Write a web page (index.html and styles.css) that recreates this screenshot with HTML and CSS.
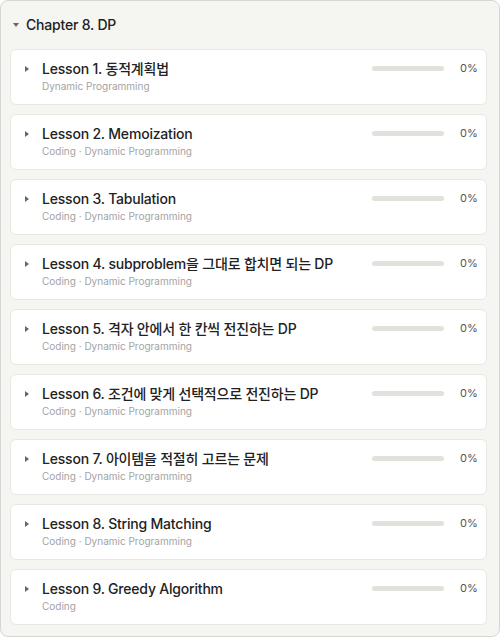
FILE: index.html
```html
<!DOCTYPE html>
<html lang="ko">
<head>
<meta charset="utf-8">
<title>Chapter 8. DP</title>
<link rel="stylesheet" href="styles.css">
</head>
<body>
<section class="chapter">
  <header class="chapter-head">
    <span class="caret-down"></span>
    <h2 class="chapter-title">Chapter 8. DP</h2>
  </header>
  <ul class="lessons">
    <li class="lesson">
      <span class="caret-right"></span>
      <div class="lesson-info">
        <div class="lesson-title">Lesson 1. 동적계획법</div>
        <div class="lesson-tags">Dynamic Programming</div>
      </div>
      <div class="progress"><div class="bar"><div class="fill" style="width:0%"></div></div><span class="pct">0%</span></div>
    </li>
    <li class="lesson">
      <span class="caret-right"></span>
      <div class="lesson-info">
        <div class="lesson-title">Lesson 2. Memoization</div>
        <div class="lesson-tags">Coding · Dynamic Programming</div>
      </div>
      <div class="progress"><div class="bar"><div class="fill" style="width:0%"></div></div><span class="pct">0%</span></div>
    </li>
    <li class="lesson">
      <span class="caret-right"></span>
      <div class="lesson-info">
        <div class="lesson-title">Lesson 3. Tabulation</div>
        <div class="lesson-tags">Coding · Dynamic Programming</div>
      </div>
      <div class="progress"><div class="bar"><div class="fill" style="width:0%"></div></div><span class="pct">0%</span></div>
    </li>
    <li class="lesson">
      <span class="caret-right"></span>
      <div class="lesson-info">
        <div class="lesson-title">Lesson 4. subproblem을 그대로 합치면 되는 DP</div>
        <div class="lesson-tags">Coding · Dynamic Programming</div>
      </div>
      <div class="progress"><div class="bar"><div class="fill" style="width:0%"></div></div><span class="pct">0%</span></div>
    </li>
    <li class="lesson">
      <span class="caret-right"></span>
      <div class="lesson-info">
        <div class="lesson-title">Lesson 5. 격자 안에서 한 칸씩 전진하는 DP</div>
        <div class="lesson-tags">Coding · Dynamic Programming</div>
      </div>
      <div class="progress"><div class="bar"><div class="fill" style="width:0%"></div></div><span class="pct">0%</span></div>
    </li>
    <li class="lesson">
      <span class="caret-right"></span>
      <div class="lesson-info">
        <div class="lesson-title">Lesson 6. 조건에 맞게 선택적으로 전진하는 DP</div>
        <div class="lesson-tags">Coding · Dynamic Programming</div>
      </div>
      <div class="progress"><div class="bar"><div class="fill" style="width:0%"></div></div><span class="pct">0%</span></div>
    </li>
    <li class="lesson">
      <span class="caret-right"></span>
      <div class="lesson-info">
        <div class="lesson-title">Lesson 7. 아이템을 적절히 고르는 문제</div>
        <div class="lesson-tags">Coding · Dynamic Programming</div>
      </div>
      <div class="progress"><div class="bar"><div class="fill" style="width:0%"></div></div><span class="pct">0%</span></div>
    </li>
    <li class="lesson">
      <span class="caret-right"></span>
      <div class="lesson-info">
        <div class="lesson-title">Lesson 8. String Matching</div>
        <div class="lesson-tags">Coding · Dynamic Programming</div>
      </div>
      <div class="progress"><div class="bar"><div class="fill" style="width:0%"></div></div><span class="pct">0%</span></div>
    </li>
    <li class="lesson">
      <span class="caret-right"></span>
      <div class="lesson-info">
        <div class="lesson-title">Lesson 9. Greedy Algorithm</div>
        <div class="lesson-tags">Coding</div>
      </div>
      <div class="progress"><div class="bar"><div class="fill" style="width:0%"></div></div><span class="pct">0%</span></div>
    </li>
  </ul>
</section>
</body>
</html>
```
FILE: styles.css
```css
* { box-sizing: border-box; }
html, body { margin: 0; padding: 0; background: #ffffff; }
body {
  font-family: Inter, "Noto Sans CJK KR", sans-serif;
  color: #222;
}
.chapter {
  width: 500px;
  height: 637px;
  background: #f5f5f1;
  border: 1px solid #d6d6d2;
  border-radius: 8px;
  padding: 0 12px 11px 9px;
}
.chapter-head {
  display: flex;
  align-items: center;
  height: 48px;
  padding-left: 3px;
}
.caret-down {
  width: 0; height: 0;
  border-left: 3px solid transparent;
  border-right: 3px solid transparent;
  border-top: 4px solid #666;
  margin-right: 7px;
}
.chapter-title {
  margin: 0;
  font-size: 14px;
  font-weight: 500;
  letter-spacing: -0.2px;
  line-height: 20px;
  color: #222;
}
.lessons {
  list-style: none;
  margin: 0;
  padding: 0;
  display: flex;
  flex-direction: column;
  gap: 9px;
}
.lesson {
  display: flex;
  align-items: flex-start;
  height: 56px;
  background: #fff;
  border: 1px solid #e8e8e3;
  border-radius: 6px;
  padding: 9px 10px 11px 14px;
}
.caret-right {
  flex: none;
  width: 0; height: 0;
  margin-top: 7px;
  margin-right: 13px;
  border-top: 3px solid transparent;
  border-bottom: 3px solid transparent;
  border-left: 4px solid #666;
}
.lesson-info { flex: 1; min-width: 0; }
.lesson-title {
  font-size: 14px;
  font-weight: 500;
  letter-spacing: -0.2px;
  line-height: 20px;
  color: #222;
}
.lesson-tags {
  font-size: 10px;
  line-height: 14px;
  color: #a3a3a3;
}
.progress {
  flex: none;
  display: flex;
  align-items: center;
  gap: 16px;
  height: 18px;
}
.bar {
  width: 72px;
  height: 5px;
  border-radius: 3px;
  background: #e2e2dc;
  overflow: hidden;
}
.fill { height: 100%; background: #4a90e2; }
.pct {
  font-size: 11px;
  color: #555;
  width: 16px;
  text-align: right;
}
```
